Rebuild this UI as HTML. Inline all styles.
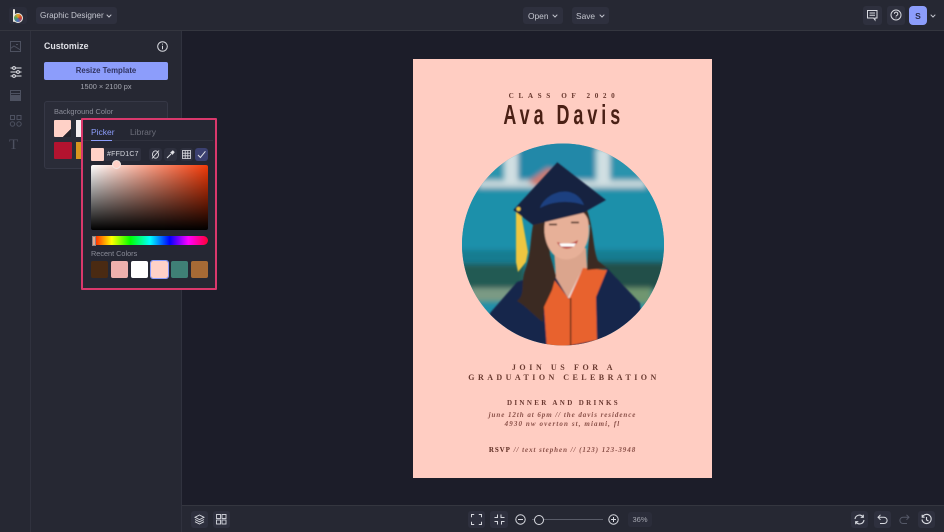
<!DOCTYPE html>
<html><head><meta charset="utf-8"><style>
*{box-sizing:border-box}
html,body{margin:0;padding:0;width:944px;height:532px;overflow:hidden;background:#1c1d29;font-family:"Liberation Sans",sans-serif}
.a{position:absolute}
.t{position:absolute;white-space:nowrap}
.btn{position:absolute;background:#2e303e;border-radius:3px}
.c{position:absolute;left:413px;width:299px;text-align:center;white-space:nowrap;color:#5a2a20;font-family:"Liberation Serif",serif}
svg{position:absolute;overflow:visible}
</style></head><body>
<!-- panels -->
<div class="a" style="left:0;top:0;width:944px;height:31px;background:#262833;border-bottom:1px solid #34363f"></div>
<div class="a" style="left:0;top:31px;width:31px;height:501px;background:#262833;border-right:1px solid #30323e"></div>
<div class="a" style="left:31px;top:31px;width:151px;height:501px;background:#262833;border-right:1px solid #30323e"></div>
<div class="a" style="left:182px;top:505px;width:762px;height:27px;background:#262833;border-top:1px solid #34363f"></div>

<!-- logo -->
<div class="btn" style="left:9px;top:7px;width:18px;height:17px;background:#2b2d3a"></div>
<div class="a" style="left:13px;top:9px;width:2px;height:13px;background:#e8e4e0;border-radius:1px"></div>
<div class="a" style="left:13px;top:13px;width:10px;height:10px;border-radius:50%;background:conic-gradient(#e8a020,#c83a30,#4a6fc0,#50a060,#e8a020);border:1.5px solid #ece8e0"></div>

<div class="btn" style="left:36px;top:7px;width:81px;height:17px"></div>
<div class="t" style="left:40px;top:10px;font-size:8.2px;line-height:12px;color:#c4c6cf">Graphic Designer</div>
<svg style="left:106px;top:14px" width="6" height="4" fill="none" stroke="#c4c6cf"><path d="M.7.7 3 3 5.3.7"/></svg>
<div class="btn" style="left:523px;top:7px;width:40px;height:17px"></div>
<div class="t" style="left:528px;top:10px;font-size:8.4px;line-height:12px;color:#c4c6cf">Open</div>
<svg style="left:552px;top:14px" width="6" height="4" fill="none" stroke="#c4c6cf"><path d="M.7.7 3 3 5.3.7"/></svg>
<div class="btn" style="left:572px;top:7px;width:37px;height:17px"></div>
<div class="t" style="left:576px;top:10px;font-size:8.4px;line-height:12px;color:#c4c6cf">Save</div>
<svg style="left:599px;top:14px" width="6" height="4" fill="none" stroke="#c4c6cf"><path d="M.7.7 3 3 5.3.7"/></svg>

<div class="btn" style="left:863px;top:6px;width:19px;height:19px"></div>
<svg style="left:867px;top:10px" width="11" height="11" fill="none" stroke="#d8dae0" stroke-width="1"><path d="M.5.5h9.5v7.5H8v2L6.5 8H.5z"/><path d="M2.5 3h5.5M2.5 5.2h5.5"/></svg>
<div class="btn" style="left:887px;top:6px;width:18px;height:19px"></div>
<svg style="left:890px;top:9px" width="12" height="12" fill="none" stroke="#d8dae0" stroke-width="1"><circle cx="6" cy="6" r="5"/><path d="M4.4 4.8a1.7 1.7 0 1 1 2.4 1.6c-.6.3-.8.6-.8 1.1M6 8.6v.7"/></svg>
<div class="a" style="left:909px;top:6px;width:18px;height:19px;background:#8c9dfb;border-radius:4px"></div>
<div class="t" style="left:909px;top:10px;width:18px;text-align:center;font-size:8.5px;line-height:12px;font-weight:bold;color:#2a2c48">S</div>
<svg style="left:930px;top:14px" width="6" height="4" fill="none" stroke="#c4c6cf"><path d="M.7.7 3 3 5.3.7"/></svg>

<!-- left rail icons -->
<svg style="left:10px;top:41px" width="12" height="12" fill="none" stroke="#4d5160"><rect x=".5" y=".5" width="10" height="10"/><path d="M.5 7.5 4 5l6.5 4M6 3.5h2"/></svg>
<svg style="left:10px;top:66px" width="12" height="12" fill="none" stroke="#e2e3e8" stroke-width="1"><path d="M.5 2h11M.5 6h11M.5 10h11"/><circle cx="4" cy="2" r="1.4" fill="#262833"/><circle cx="8" cy="6" r="1.4" fill="#262833"/><circle cx="4" cy="10" r="1.4" fill="#262833"/></svg>
<svg style="left:10px;top:90px" width="12" height="12" fill="none" stroke="#4d5160"><rect x=".5" y=".5" width="10" height="10"/><path d="M.5 3.5h10" /><rect x="1" y="5" width="9" height="5" fill="#4d5160" stroke="none"/></svg>
<svg style="left:10px;top:115px" width="12" height="12" fill="none" stroke="#4d5160"><rect x=".5" y=".5" width="4" height="4"/><rect x="7" y=".5" width="4" height="4"/><circle cx="2.5" cy="9" r="2.2"/><circle cx="9" cy="9" r="2.2"/></svg>
<div class="t" style="left:9px;top:137px;font-family:'Liberation Serif',serif;font-size:15px;line-height:16px;color:#4d5160">T</div>

<!-- customize panel -->
<div class="t" style="left:44px;top:40px;font-size:8.8px;line-height:13px;font-weight:bold;color:#dfe0e6">Customize</div>
<svg style="left:157px;top:41px" width="11" height="11" fill="none" stroke="#d8dae0"><circle cx="5.5" cy="5.5" r="4.8"/><path d="M5.5 4.8v3.4M5.5 2.6v1"/></svg>
<div class="a" style="left:44px;top:62px;width:124px;height:18px;background:#8c9dfb;border-radius:2px"></div>
<div class="t" style="left:44px;top:65px;width:124px;text-align:center;font-size:7.8px;line-height:12px;font-weight:bold;color:#303360">Resize Template</div>
<div class="t" style="left:44px;top:81px;width:124px;text-align:center;font-size:7.4px;line-height:11px;color:#a6a8b2">1500 × 2100 px</div>
<div class="a" style="left:44px;top:101px;width:124px;height:68px;background:#2a2c38;border:1px solid #363846;border-radius:3px"></div>
<div class="t" style="left:54px;top:106px;font-size:7.4px;line-height:11px;color:#8b8d99">Background Color</div>
<div class="a" style="left:54px;top:120px;width:17px;height:17px;background:#ffd1c7;border-radius:1px"></div>
<div class="a" style="left:63px;top:129px;width:8px;height:8px;background:linear-gradient(135deg,transparent 50%,#25242c 50%)"></div>
<div class="a" style="left:76px;top:120px;width:6px;height:17px;background:#f4eef0"></div>
<div class="a" style="left:54px;top:142px;width:18px;height:17px;background:#b3132f;border-radius:1px"></div>
<div class="a" style="left:76px;top:142px;width:6px;height:17px;background:#d9951f"></div>

<!-- picker -->
<div class="a" style="left:81px;top:118px;width:136px;height:172px;background:#252733;border:2px solid #d9386c;border-radius:1px"></div>
<div class="a" style="left:83px;top:140px;width:130px;height:1px;background:#30323e"></div>
<div class="t" style="left:91px;top:127px;font-size:8.5px;line-height:11px;color:#8c9dfb">Picker</div>
<div class="a" style="left:91px;top:140px;width:21px;height:1px;background:#8c9dfb"></div>
<div class="t" style="left:130px;top:127px;font-size:8.5px;line-height:11px;color:#6c6e7a">Library</div>
<div class="a" style="left:91px;top:148px;width:13px;height:13px;background:#ffd1c7;border-radius:1px"></div>
<div class="a" style="left:104px;top:148px;width:37px;height:13px;background:#2e303e;border-radius:2px"></div>
<div class="t" style="left:107px;top:150px;font-size:7px;line-height:10px;color:#d6d7de;letter-spacing:.2px">#FFD1C7</div>
<div class="btn" style="left:149px;top:148px;width:13px;height:13px"></div>
<div class="btn" style="left:164px;top:148px;width:13px;height:13px"></div>
<div class="btn" style="left:180px;top:148px;width:13px;height:13px"></div>
<div class="btn" style="left:195px;top:148px;width:13px;height:13px;background:#3b4070"></div>
<svg style="left:151px;top:150px" width="9" height="9" fill="none" stroke="#e0e1e6" stroke-width=".9"><ellipse cx="4.5" cy="4.5" rx="3" ry="3.7"/><path d="M1 8.5 8 .5"/></svg>
<svg style="left:166px;top:150px" width="9" height="9" fill="none" stroke="#e0e1e6" stroke-width="1.1"><path d="M1 8 5 4"/><path d="M5 2.5 6.8 1l1.2 1.2L6.5 4z" fill="#e0e1e6"/></svg>
<svg style="left:182px;top:150px" width="9" height="9" fill="none" stroke="#e0e1e6" stroke-width=".8"><rect x=".5" y=".5" width="8" height="8"/><path d="M3.2.5v8M5.8.5v8M.5 3.2h8M.5 5.8h8"/></svg>
<svg style="left:197px;top:150px" width="9" height="9" fill="none" stroke="#e0e1e6" stroke-width="1"><path d="M1 5 3.4 7.5 8.4 1.3"/></svg>
<div class="a" style="left:91px;top:165px;width:117px;height:65px;border-radius:2px;background:linear-gradient(to top,#000,rgba(0,0,0,0)),linear-gradient(to right,#fff,#f33a08)"></div>
<div class="a" style="left:112px;top:160px;width:9px;height:9px;border-radius:50%;background:#ffd1c7;border:1px solid #f2e6e2"></div>
<div class="a" style="left:92px;top:236px;width:116px;height:9px;border-radius:5px;background:linear-gradient(to right,#f00 0%,#ff0 17%,#0f0 33%,#0ff 50%,#00f 67%,#f0f 83%,#f03 100%)"></div>
<div class="a" style="left:92px;top:236px;width:4px;height:10px;background:#e8a58c;border:1px solid #888"></div>
<div class="t" style="left:91px;top:249px;font-size:7.3px;line-height:10px;color:#8b8d99">Recent Colors</div>
<div class="a" style="left:91px;top:261px;width:17px;height:17px;background:#4a2a12;border-radius:2px"></div>
<div class="a" style="left:111px;top:261px;width:17px;height:17px;background:#edb0ad;border-radius:2px"></div>
<div class="a" style="left:131px;top:261px;width:17px;height:17px;background:#fff;border-radius:2px"></div>
<div class="a" style="left:151px;top:261px;width:17px;height:17px;background:#ffd1c7;border-radius:2px;outline:1px solid #8c9dfb"></div>
<div class="a" style="left:171px;top:261px;width:17px;height:17px;background:#3f8076;border-radius:2px"></div>
<div class="a" style="left:191px;top:261px;width:17px;height:17px;background:#a66a35;border-radius:2px"></div>

<!-- document -->
<div class="a" style="left:413px;top:59px;width:299px;height:419px;background:#ffcdc2"></div>
<svg style="left:0;top:0" width="944" height="532" viewBox="0 0 944 532">
<defs>
<clipPath id="cp"><circle cx="563" cy="244.5" r="101"/></clipPath>
<filter id="b1" x="-20%" y="-20%" width="140%" height="140%"><feGaussianBlur stdDeviation="2.6"/></filter>
<filter id="b2" x="-5%" y="-5%" width="110%" height="110%"><feGaussianBlur stdDeviation=".7"/></filter>
</defs>
<g clip-path="url(#cp)">
<rect x="455" y="135" width="216" height="216" fill="#1f8fa9"/>
<g filter="url(#b1)">
<rect x="518" y="140" width="77" height="40" fill="#2388a8"/>
<rect x="455" y="140" width="48" height="40" fill="#2a95ad"/>
<rect x="610" y="140" width="60" height="40" fill="#2a93ad"/>
<rect x="478" y="180" width="168" height="8" fill="#c4d6da"/>
<rect x="504" y="150" width="14" height="34" fill="#d0dfe2"/>
<rect x="596" y="148" width="14" height="36" fill="#d0dfe2"/>
<path d="M528 182 548 168 560 172 540 188Z" fill="#d07a70"/>
<rect x="455" y="188" width="216" height="72" fill="#1c90aa"/>
<rect x="455" y="250" width="216" height="18" fill="#177c90"/>
<rect x="455" y="264" width="70" height="24" fill="#245a52"/>
<rect x="590" y="262" width="80" height="28" fill="#205048"/>
<rect x="470" y="288" width="50" height="14" fill="#7a9a84"/>
<rect x="612" y="288" width="40" height="16" fill="#6f9670"/>
</g>
<g filter="url(#b2)">
<!-- gown -->
<path d="M486 350 490 313 517 282 552 270 570 290 607 268 640 303 645 350Z" fill="#13264b"/>
<!-- tassel -->
<path d="M516 208 520 207 528 252 526 262 518 272 516 262Z" fill="#eec63f"/>
<!-- neck -->
<path d="M554 250 586 248 587 268 578 294 568 298 556 278Z" fill="#dba58d"/>
<!-- shirt -->
<path d="M568 298 581 272 588 268 579 298Z" fill="#eee9e6"/>
<!-- sash -->
<path d="M552 277 569 299 583 268 607 270 596 297 597 340 547 350 544 307Z" fill="#e8622e"/>
<rect x="570" y="298" width="1.2" height="52" fill="#3a2018"/>
<!-- hair -->
<path d="M538 208C548 197 580 197 587 210 594 230 593 250 598 261L607 268 587 270 588 250 590 225 548 225 550 255 556 276 552 290 544 307 543 322C534 316 526 306 517 301 526 294 520 284 525 270 531 256 530 240 533 225Z" fill="#3b2a22"/>
<!-- face -->
<path d="M545 222C549 204 583 202 588 220 591 236 587 250 576 257 568 261 558 260 552 253 546 245 543 234 545 222Z" fill="#e7b098"/>
<path d="M557 242C565 245 572 244 578 240 576 250 561 252 557 242Z" fill="#b83a38"/>
<path d="M559 243.500H576L574 246.500H561Z" fill="#fff"/>
<path d="M549 224.500h8M571 222.500h8" stroke="#3a2018" stroke-width="1.6" fill="none"/>
<!-- cap -->
<path d="M513.300 210 557.300 162.300 606 200 583 213 533 225Z" fill="#14243f"/>
<path d="M540 208C546 191 575 183 584 205 570 200 552 201 540 208Z" fill="#1e4180"/>
<circle cx="518.500" cy="209" r="2" fill="#eec63f"/>
</g>
</g>
</svg>
<div class="c" style="top:91px;font-size:7.2px;line-height:10px;letter-spacing:4.6px;font-weight:bold;text-indent:3px;color:#6a3a30">CLASS OF 2020</div>
<div class="c" style="top:99px;font-family:'Liberation Sans',sans-serif;font-weight:bold;font-size:28px;line-height:32px;letter-spacing:6.2px;color:#4a2015;transform:scaleX(.64);text-indent:4px">Ava Davis</div>
<div class="c" style="top:363px;font-size:8px;line-height:10px;letter-spacing:3.6px;font-weight:bold;text-indent:3px;color:#6a3a30">JOIN US FOR A</div>
<div class="c" style="top:373px;font-size:8px;line-height:10px;letter-spacing:3.45px;font-weight:bold;text-indent:3px;color:#6a3a30">GRADUATION CELEBRATION</div>
<div class="c" style="top:398px;font-size:7px;line-height:10px;letter-spacing:2.35px;font-weight:bold;color:#6a3830;text-indent:2px">DINNER AND DRINKS</div>
<div class="c" style="top:410px;font-size:7px;line-height:10px;letter-spacing:.95px;font-style:italic;color:#8a5048;font-weight:bold">june 12th at 6pm // the davis residence</div>
<div class="c" style="top:419px;font-size:7px;line-height:10px;letter-spacing:1.1px;font-style:italic;color:#8a5048;font-weight:bold">4930 nw overton st, miami, fl</div>
<div class="c" style="top:445px;font-size:7px;line-height:10px;letter-spacing:.95px;font-style:italic;color:#8a5048;font-weight:bold"><span style="font-style:normal;color:#5a2a20">RSVP</span> // text stephen // (123) 123-3948</div>

<!-- bottom bar -->
<div class="btn" style="left:191px;top:511px;width:17px;height:17px"></div>
<svg style="left:194px;top:514px" width="11" height="11" fill="none" stroke="#d8dae0" stroke-width=".9"><path d="M5.5 1 10 3.3 5.5 5.600 1 3.300zM1 5.500l4.500 2.300L10 5.500M1 7.700 5.500 10 10 7.700"/></svg>
<div class="btn" style="left:213px;top:511px;width:17px;height:17px"></div>
<svg style="left:216px;top:514px" width="11" height="11" fill="none" stroke="#d8dae0" stroke-width=".9"><rect x=".5" y=".5" width="4" height="4"/><rect x="6" y=".5" width="4" height="4"/><rect x=".5" y="6" width="4" height="4"/><rect x="6" y="6" width="4" height="4"/></svg>
<div class="btn" style="left:468px;top:511px;width:17px;height:17px"></div>
<svg style="left:471px;top:514px" width="11" height="11" fill="none" stroke="#d8dae0"><path d="M.5 3.200V.5h2.700M7.800.5h2.700v2.700M10.500 7.800v2.700H7.800M3.200 10.500H.5V7.800"/></svg>
<div class="btn" style="left:490px;top:511px;width:18px;height:17px"></div>
<svg style="left:494px;top:514px" width="11" height="11" fill="none" stroke="#d8dae0"><path d="M.5 3.500h3v-3M7 .5v3h3.500M10.500 7.500h-3v3M3.500 10.500v-3h-3"/></svg>
<svg style="left:515px;top:514px" width="11" height="11" fill="none" stroke="#d8dae0"><circle cx="5.500" cy="5.500" r="4.700"/><path d="M3 5.500h5"/></svg>
<div class="a" style="left:532px;top:519px;width:71px;height:1px;background:#595c68"></div>
<div class="a" style="left:534px;top:515px;width:10px;height:10px;border-radius:50%;background:#262833;border:1px solid #d8dae0"></div>
<svg style="left:608px;top:514px" width="11" height="11" fill="none" stroke="#d8dae0"><circle cx="5.500" cy="5.500" r="4.700"/><path d="M3 5.500h5M5.500 3v5"/></svg>
<div class="btn" style="left:628px;top:512px;width:24px;height:15px;background:#2b2d3a"></div>
<div class="t" style="left:628px;top:515px;width:24px;text-align:center;font-size:7.5px;line-height:10px;color:#a6a8b2">36%</div>
<div class="btn" style="left:851px;top:511px;width:17px;height:17px"></div>
<svg style="left:854px;top:514px" width="11" height="11" fill="none" stroke="#d8dae0" stroke-width="1.1"><path d="M1 5A4.500 4.500 0 0 1 9 2.800M10 6A4.500 4.500 0 0 1 2 8.200M9.300.7v2.600H6.700M1.700 10.300V7.700h2.600"/></svg>
<div class="btn" style="left:874px;top:511px;width:17px;height:17px"></div>
<svg style="left:877px;top:514px" width="11" height="11" fill="none" stroke="#d8dae0"><path d="M3.500.8 1 3.300l2.500 2.500M1 3.300h6a3 3 0 0 1 0 6.200H3"/></svg>
<svg style="left:899px;top:514px" width="11" height="11" fill="none" stroke="#555968"><path d="M7.500.8 10 3.300 7.500 5.800M10 3.300H4a3 3 0 0 0 0 6.200h4"/></svg>
<div class="btn" style="left:918px;top:511px;width:17px;height:17px"></div>
<svg style="left:921px;top:514px" width="11" height="11" fill="none" stroke="#d8dae0" stroke-width="1.1"><path d="M1.500 2.800A4.600 4.600 0 1 1 1 5.500M1.200.8v2.400h2.400M5.500 3v2.800l2 1.200"/></svg>
</body></html>
